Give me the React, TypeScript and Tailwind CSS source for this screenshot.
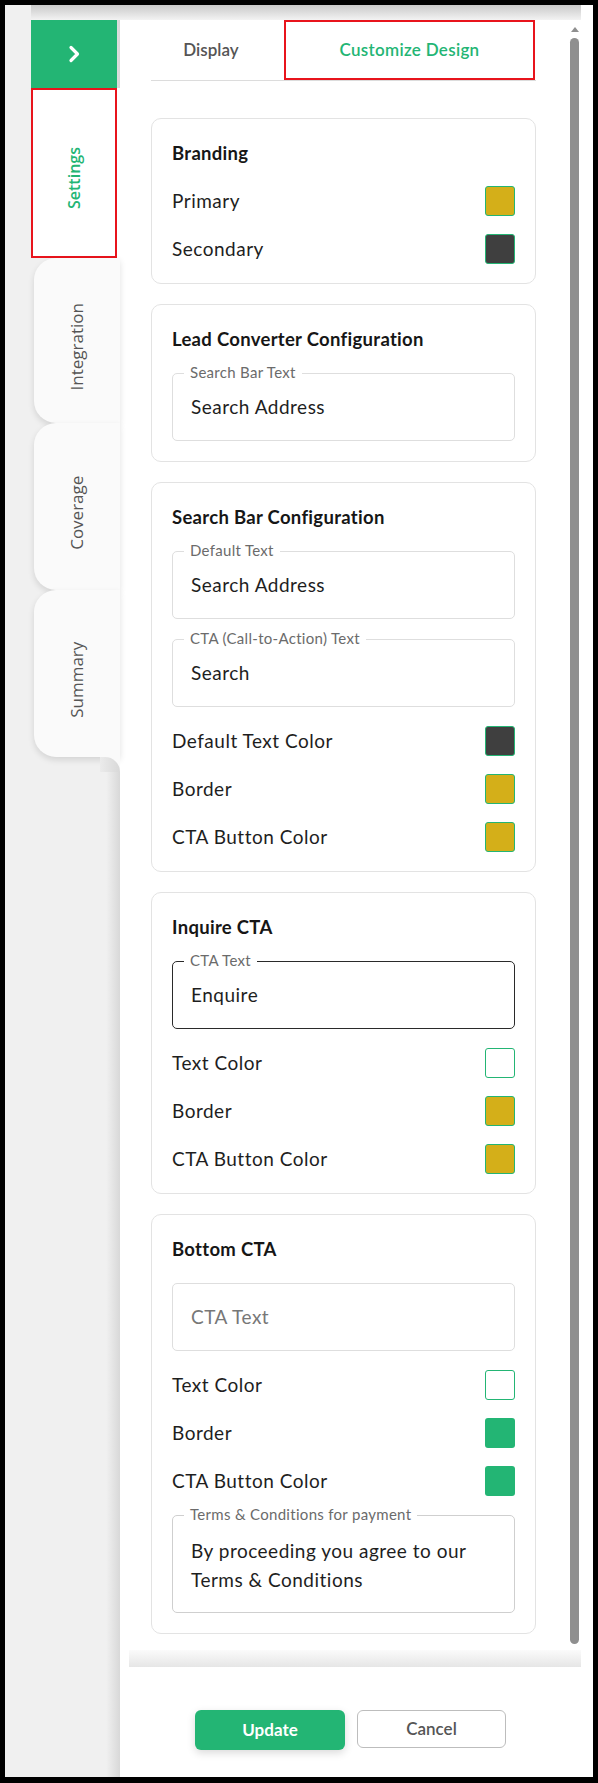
import React from "react";

const GREEN = "#23b574";
const GOLD = "#d4af19";
const DARK = "#3f3f3f";

function SideTab({ label, height }: { label: string; height: string }) {
  return (
    <div
      className={`ml-[3px] flex w-[86px] items-center justify-center rounded-l-[22px] bg-[#fafafa] pt-[12px] shadow-[0_3px_6px_rgba(0,0,0,0.12)] ${height}`}
    >
      <span className="-rotate-90 whitespace-nowrap font-['Open_Sans',sans-serif] text-[17px] text-[#555]">
        {label}
      </span>
    </div>
  );
}

function Field({
  label,
  value,
  placeholder,
  focused,
}: {
  label?: string;
  value?: string;
  placeholder?: string;
  focused?: boolean;
}) {
  return (
    <div
      className={`relative flex h-[68px] items-center rounded-[5px] border px-[18px] text-[19px] tracking-[0.5px] ${
        focused ? "border-[#2a2a2a]" : "border-[#dedede]"
      }`}
    >
      {label && (
        <span className="absolute -top-[11px] left-[11px] bg-white px-[6px] text-[15px] leading-[18px] tracking-[0.3px] text-[#6b6b6b]">
          {label}
        </span>
      )}
      {value ? (
        <span className="text-[#1e1e1e]">{value}</span>
      ) : (
        <span className="text-[#777]">{placeholder}</span>
      )}
    </div>
  );
}

function ColorRow({ label, color, filled }: { label: string; color: string; filled?: boolean }) {
  return (
    <div className="flex h-[28px] items-center justify-between">
      <span className="text-[19px] tracking-[0.5px] text-[#1e1e1e]">{label}</span>
      <span
        className={`h-[30px] w-[30px] rounded-[3px] ${filled ? "" : "border border-[#23b574]"}`}
        style={{ backgroundColor: color }}
      />
    </div>
  );
}

function Card({ title, children }: { title: string; children: React.ReactNode }) {
  return (
    <div className="flex flex-col gap-5 rounded-[10px] border border-[#e3e3e3] p-5">
      <h2 className="text-[18.5px] font-bold leading-[28px] tracking-[0.3px] text-[#161616]">{title}</h2>
      {children}
    </div>
  );
}

export default function App() {
  return (
    <div className="h-[1783px] w-[598px] bg-black p-[5px] font-['Lato',sans-serif]">
      <div className="flex h-[1772px] w-[588px] flex-col bg-white">
        {/* top shadow strip */}
        <div className="flex h-[15px]">
          <div className="w-[26px] bg-[#f0f0f0]" />
          <div className="w-[550px] bg-gradient-to-b from-[#c9c9c9] to-[#f3f3f3]" />
          <div className="flex-1 bg-white" />
        </div>

        <div className="flex flex-1">
          {/* sidebar */}
          <div className="flex w-[115px] flex-col bg-gradient-to-r from-[#f0f0f0] from-[88%] to-[#d8d8d8] pl-[26px]">
            <div className="flex h-[68px] w-[86px] items-center justify-center" style={{ backgroundColor: GREEN }}>
              <svg width="14" height="18" viewBox="0 0 14 18" fill="none">
                <path d="M4 2.5l6.5 6.5-6.5 6.5" stroke="white" strokeWidth="3.2" strokeLinecap="round" strokeLinejoin="round" />
              </svg>
            </div>
            <div className="h-[170px] w-[89px] bg-white">
              <div className="flex h-full w-[86px] items-center justify-center border-[2.5px] border-[#e8141c] pt-[10px]">
                <span className="-rotate-90 whitespace-nowrap font-['Open_Sans',sans-serif] text-[16px] font-semibold text-[#23b574]">
                  Settings
                </span>
              </div>
            </div>
            <SideTab label="Integration" height="h-[165px]" />
            <SideTab label="Coverage" height="h-[167px]" />
            <SideTab label="Summary" height="h-[167px]" />
            <div className="ml-auto h-[15px] w-[20px] bg-[#fafafa]">
              <div className="h-full w-full rounded-tr-[20px] bg-gradient-to-r from-[#ebebeb] to-[#d8d8d8]" />
            </div>
          </div>

          {/* main panel */}
          <div className="flex w-[473px] flex-col">
            <div className="ml-[9px] flex h-[1647px] w-[452px] flex-col">
              <div className="flex flex-1">
                <div className="w-[419px] pl-[22px]">
                  <div className="flex h-[61px] w-[385px] border-b border-[#dcdcdc]">
                    <div className="flex w-[120px] items-center justify-center text-[17px] font-semibold text-[#555]">
                      Display
                    </div>
                    <div className="ml-[13px] flex w-[251px] items-center justify-center border-2 border-[#e8141c] text-[17px] font-semibold tracking-[0.3px] text-[#23b574]">
                      Customize Design
                    </div>
                  </div>

                  <div className="mt-[37px] flex w-[385px] flex-col gap-5">
                    <Card title="Branding">
                      <ColorRow label="Primary" color={GOLD} />
                      <ColorRow label="Secondary" color={DARK} />
                    </Card>

                    <Card title="Lead Converter Configuration">
                      <Field label="Search Bar Text" value="Search Address" />
                    </Card>

                    <Card title="Search Bar Configuration">
                      <Field label="Default Text" value="Search Address" />
                      <Field label="CTA (Call-to-Action) Text" value="Search" />
                      <ColorRow label="Default Text Color" color={DARK} />
                      <ColorRow label="Border" color={GOLD} />
                      <ColorRow label="CTA Button Color" color={GOLD} />
                    </Card>

                    <Card title="Inquire CTA">
                      <Field label="CTA Text" value="Enquire" focused />
                      <ColorRow label="Text Color" color="#ffffff" />
                      <ColorRow label="Border" color={GOLD} />
                      <ColorRow label="CTA Button Color" color={GOLD} />
                    </Card>

                    <Card title="Bottom CTA">
                      <Field placeholder="CTA Text" />
                      <ColorRow label="Text Color" color="#ffffff" />
                      <ColorRow label="Border" color={GREEN} filled />
                      <ColorRow label="CTA Button Color" color={GREEN} filled />
                      <div className="relative h-[98px] rounded-[5px] border border-[#cfcfcf] px-[18px] pt-[20px] text-[19px] leading-[29px] tracking-[0.5px] text-[#1e1e1e]">
                        <span className="absolute -top-[11px] left-[11px] bg-white px-[6px] text-[15px] leading-[18px] tracking-[0.3px] text-[#6b6b6b]">
                          Terms &amp; Conditions for payment
                        </span>
                        By proceeding you agree to our
                        <br />
                        Terms &amp; Conditions
                      </div>
                    </Card>
                  </div>
                </div>

                {/* scrollbar */}
                <div className="ml-[22px] flex w-[9px] flex-col items-center pt-[7px]">
                  <svg width="8" height="5" viewBox="0 0 8 5">
                    <path d="M4 0L8 5H0z" fill="#8f8f8f" />
                  </svg>
                  <div className="mt-[6px] h-[1606px] w-[9px] rounded-full bg-[#8f8f8f]" />
                </div>
              </div>
              <div className="h-[17px] bg-gradient-to-b from-[#fbfbfb] to-[#e6e6e6]" />
            </div>

            <div className="flex flex-1 gap-3 pl-[75px] pt-[43px]">
              <button className="h-[40px] w-[150px] rounded-[6px] text-[17px] font-bold text-white shadow-[0_3px_8px_rgba(0,0,0,0.15)]" style={{ backgroundColor: GREEN }}>
                Update
              </button>
              <button className="h-[38px] w-[149px] rounded-[6px] border border-[#bdbdbd] bg-white text-[17px] font-semibold text-[#555]">
                Cancel
              </button>
            </div>
          </div>
        </div>
      </div>
    </div>
  );
}
